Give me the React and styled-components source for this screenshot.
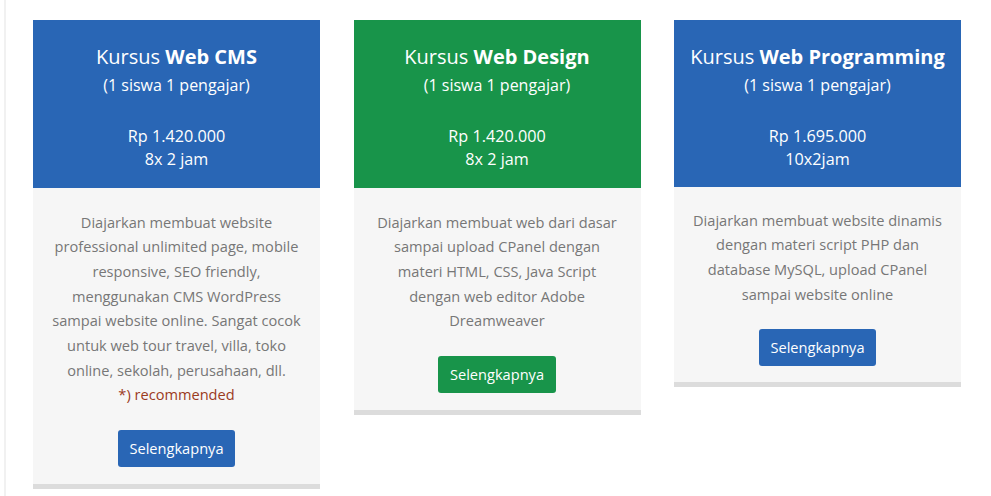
import styled, { createGlobalStyle } from "styled-components";

const GlobalStyle = createGlobalStyle`
	* {
		box-sizing: border-box;
	}
	body {
		margin: 0;
		background: #fff;
		font-family: "Open Sans", "Liberation Sans", Arial, sans-serif;
	}
`;

const Page = styled.div`
	margin-left: 4px;
	min-height: 496px;
	border-left: 2px solid #f1f1f1;
	padding: 20px 0 0 27px;
`;

const Grid = styled.div`
	display: grid;
	grid-template-columns: repeat(3, 287px);
	column-gap: 33.5px;
	align-items: start;
`;

const Card = styled.div`
	background-color: #f6f6f6;
	border-bottom: 5px solid #dcdcdc;
	text-align: center;
`;

const Header = styled.div`
	background-color: ${(p) => p.$bg};
	color: #fff;
	padding: 25px 10px ${(p) => p.$pb || "17px"};
`;

const Title = styled.h3`
	margin: 0;
	font-size: 20px;
	line-height: 24px;
	font-weight: 400;
	b {
		font-weight: 700;
	}
`;

const Sub = styled.p`
	margin: 5px 0 28px;
	font-size: 16px;
	line-height: 23px;
`;

const Price = styled.p`
	margin: 0;
	font-size: 16.2px;
	line-height: 23px;
`;

const Body = styled.div`
	padding: ${(p) => p.$pt || "21.5px"} 18px ${(p) => p.$pbot || "17.5px"};
	p {
		margin: 0 0 22.5px;
		font-size: 14.6px;
		line-height: 24.7px;
		color: #777;
	}
	span {
		color: #9b3b1e;
	}
`;

const MoreButton = styled.a`
	display: inline-block;
	background-color: ${(p) => p.$bg};
	color: #fff;
	font-size: 14.6px;
	line-height: 23px;
	padding: 7px 11.5px;
	border-radius: 3px;
	text-decoration: none;
	cursor: pointer;
`;

const BLUE = "#2966b5";
const GREEN = "#18944a";

const courses = [
	{
		name: "Web CMS",
		color: BLUE,
		price: "Rp 1.420.000",
		duration: "8x 2 jam",
		desc: "Diajarkan membuat website professional unlimited page, mobile responsive, SEO friendly, menggunakan CMS WordPress sampai website online. Sangat cocok untuk web tour travel, villa, toko online, sekolah, perusahaan, dll.",
		note: "*) recommended",
	},
	{
		name: "Web Design",
		color: GREEN,
		price: "Rp 1.420.000",
		duration: "8x 2 jam",
		desc: "Diajarkan membuat web dari dasar sampai upload CPanel dengan materi HTML, CSS, Java Script dengan web editor Adobe Dreamweaver",
	},
	{
		name: "Web Programming",
		color: BLUE,
		price: "Rp 1.695.000",
		duration: "10x2jam",
		desc: "Diajarkan membuat website dinamis dengan materi script PHP dan database MySQL, upload CPanel sampai website online",
		pb: "16px",
		bodyTop: "20.5px",
		bodyBottom: "16px",
	},
];

export default function App() {
	return (
		<>
			<GlobalStyle />
			<Page>
				<Grid>
					{courses.map((c) => (
						<Card key={c.name}>
							<Header $bg={c.color} $pb={c.pb}>
								<Title>
									Kursus <b>{c.name}</b>
								</Title>
								<Sub>(1 siswa 1 pengajar)</Sub>
								<Price>{c.price}</Price>
								<Price>{c.duration}</Price>
							</Header>
							<Body $pt={c.bodyTop} $pbot={c.bodyBottom}>
								<p>
									{c.desc}
									{c.note && (
										<>
											<br />
											<span>{c.note}</span>
										</>
									)}
								</p>
								<MoreButton $bg={c.color}>Selengkapnya</MoreButton>
							</Body>
						</Card>
					))}
				</Grid>
			</Page>
		</>
	);
}
